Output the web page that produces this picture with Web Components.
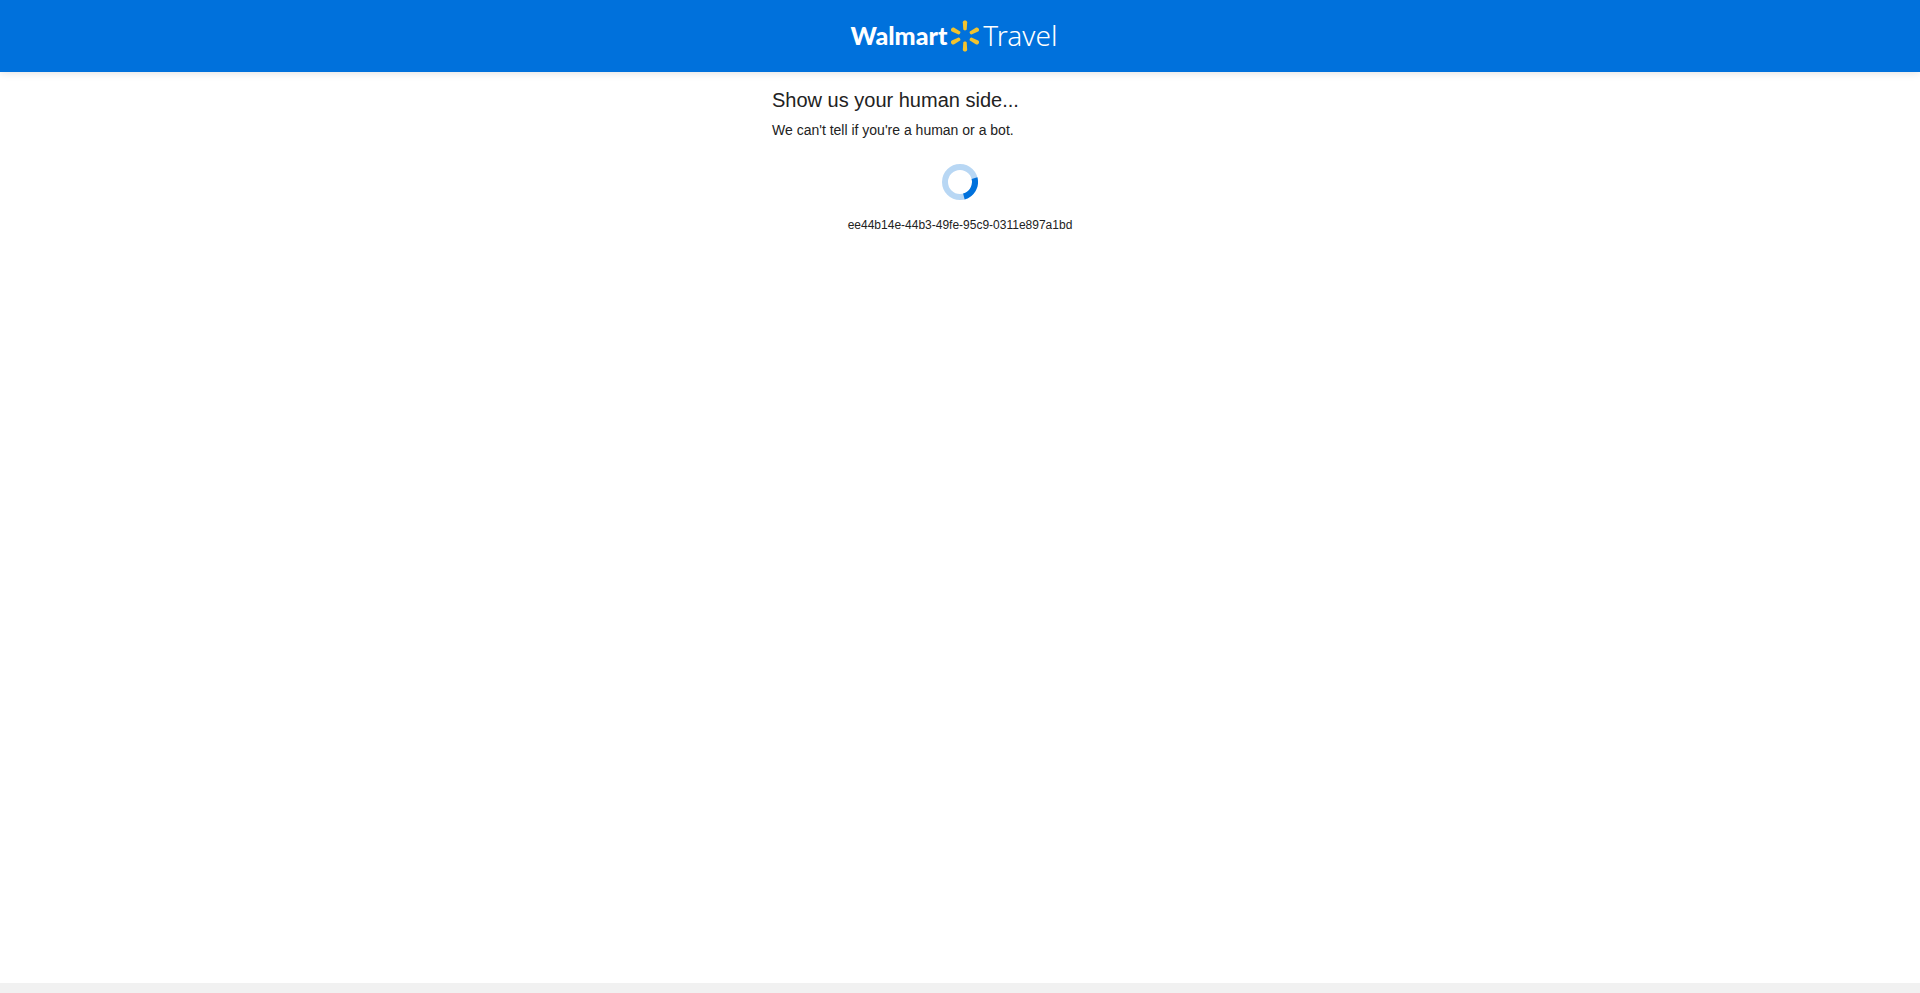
<!DOCTYPE html>
<html lang="en">
<head>
<meta charset="utf-8">
<title>Walmart Travel</title>
<style>
html, body { margin: 0; }
body { background: #fff; color: #222; font-family: "Liberation Sans", Arial, sans-serif; }
</style>
</head>
<body>
<travel-page>
  <travel-header slot="header"></travel-header>
  <challenge-panel>
    <span slot="title">Show us your human side...</span>
    <span slot="message">We can't tell if you're a human or a bot.</span>
    <loading-spinner slot="status"></loading-spinner>
    <span slot="reference">ee44b14e-44b3-49fe-95c9-0311e897a1bd</span>
  </challenge-panel>
</travel-page>
<script>
const define = (name, html) => {
  const template = document.createElement('template');
  template.innerHTML = html;
  customElements.define(name, class extends HTMLElement {
    constructor() {
      super();
      this.attachShadow({ mode: 'open' }).append(template.content.cloneNode(true));
    }
  });
};

define('travel-page', `
<style>
:host { display: flex; flex-direction: column; min-height: 100vh; }
main { flex: 1; }
footer { height: 10px; background: #f1f1f1; }
</style>
<slot name="header"></slot>
<main><slot></slot></main>
<footer></footer>`);

define('travel-header', `
<style>
:host { display: block; background: #0071dc; box-shadow: 0 1px 8px rgba(0, 0, 0, .12); }
header { display: flex; justify-content: center; align-items: center; height: 72px; padding-right: 12px; box-sizing: border-box; }
</style>
<header><brand-logo></brand-logo></header>`);

define('brand-logo', `
<style>
:host { display: flex; align-items: center; color: #fff; line-height: 36px; }
span { padding-bottom: 2px; }
.name { font: 900 25px/36px Lato, "Open Sans", sans-serif; }
svg { width: 28px; height: 32px; margin: 0 4px; }
.unit { font: 300 28px/36px "Noto Sans", "Open Sans", sans-serif; }
</style>
<span class="name">Walmart</span>
<svg viewBox="-14 -16 28 32" fill="#f2c32e" aria-hidden="true">
  <defs><path id="ray" d="M-2.2-13.8C-2.2-16.2 2.2-16.2 2.2-13.8L1.7-6.4C1.5-5.3-1.5-5.3-1.7-6.4Z"/></defs>
  <use href="#ray"/><use href="#ray" transform="rotate(62)"/><use href="#ray" transform="rotate(118)"/>
  <use href="#ray" transform="rotate(180)"/><use href="#ray" transform="rotate(242)"/><use href="#ray" transform="rotate(298)"/>
</svg>
<span class="unit">Travel</span>`);

define('challenge-panel', `
<style>
:host { display: block; box-sizing: border-box; width: 100%; max-width: 376px; margin: 0 auto; padding-top: 16px; }
h1 { margin: 0; font-size: 20px; font-weight: 400; line-height: 24px; }
p { margin: 0; }
.message { margin-top: 8px; font-size: 14px; line-height: 20px; }
.status { display: flex; justify-content: center; margin-top: 24px; }
.reference { margin-top: 16px; font-size: 12px; line-height: 18px; text-align: center; }
</style>
<h1><slot name="title"></slot></h1>
<p class="message"><slot name="message"></slot></p>
<div class="status"><slot name="status"></slot></div>
<p class="reference"><slot name="reference"></slot></p>`);

define('loading-spinner', `
<style>
:host { display: block; width: 36px; height: 36px; }
svg { display: block; width: 100%; height: 100%; }
</style>
<svg viewBox="0 0 36 36" fill="none" stroke-width="6" role="img" aria-label="Loading">
  <circle cx="18" cy="18" r="15" stroke="#b8d7f4"/>
  <circle cx="18" cy="18" r="15" stroke="#0071dc" pathLength="360" stroke-dasharray="90 270" transform="rotate(-15 18 18)"/>
</svg>`);
</script>
</body>
</html>
